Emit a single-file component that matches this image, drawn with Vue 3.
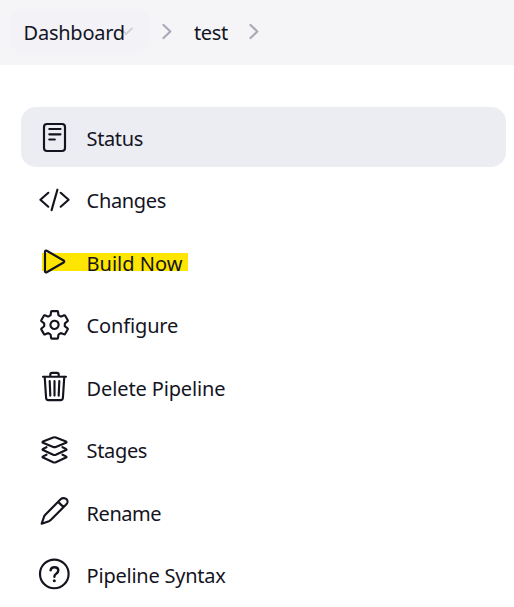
<script setup>
const items = [
  { label: 'Status', icon: 'status', active: true, tracking: -0.38 },
  { label: 'Changes', icon: 'code', tracking: -0.35 },
  { label: 'Build Now', icon: 'play', marked: true, tracking: 0 },
  { label: 'Configure', icon: 'gear', tracking: -0.15 },
  { label: 'Delete Pipeline', icon: 'trash', tracking: -0.13 },
  { label: 'Stages', icon: 'layers', tracking: -0.35 },
  { label: 'Rename', icon: 'pencil', tracking: -0.45 },
  { label: 'Pipeline Syntax', icon: 'help', tracking: -0.23 },
]
</script>

<template>
  <div class="page">
    <nav class="breadcrumbs">
      <a class="crumb current">
        <span>Dashboard</span>
        <svg class="tick" width="14" height="10" viewBox="0 0 14 10"><path d="M1.500 2.500 6 7 12.500 1" /></svg>
      </a>
      <svg class="chevron first" width="10" height="17" viewBox="0 0 10 17"><path d="M1.5 2 8.3 8.5 1.5 15" /></svg>
      <a class="crumb plain">test</a>
      <svg class="chevron" width="10" height="17" viewBox="0 0 10 17"><path d="M1.5 2 8.3 8.5 1.5 15" /></svg>
    </nav>

    <aside class="tasks">
      <a v-for="item in items" :key="item.label" class="task" :class="{ active: item.active }">
        <span v-if="item.marked" class="marker"></span>
        <svg class="icon" width="36" height="36" viewBox="0 0 36 36">
          <g v-if="item.icon === 'status'">
            <rect x="7" y="5" width="21" height="27" rx="3" />
            <path d="M12.3 10h11.2M12.3 15.3h11.2M12.3 20.5h5.5" />
          </g>
          <path v-else-if="item.icon === 'code'" d="M11.300 10.800 3.400 17.700l7.900 7M23.700 10.800l7.900 6.900-7.900 7M20.400 7.700l-5.800 20.400" />
          <path v-else-if="item.icon === 'play'" d="M8 7.700v19.600c0 1 .8 1.500 1.700 1l16.900-9.800c.9-.5.9-1.500 0-2L9.700 6.700C8.800 6.200 8 6.700 8 7.700z" />
          <g v-else-if="item.icon === 'gear'" transform="translate(1.100 1.400) scale(.0642)" class="fine">
            <path d="M262.29 192.31a64 64 0 1057.4 57.4 64.13 64.13 0 00-57.4-57.4zM416.39 256a154.34 154.34 0 01-1.53 20.79l45.21 35.46a10.81 10.81 0 012.45 13.75l-42.77 74a10.81 10.81 0 01-13.14 4.59l-44.9-18.08a16.11 16.11 0 00-15.17 1.75A164.48 164.48 0 01325 400.8a15.94 15.94 0 00-8.82 12.14l-6.73 47.89a11.08 11.08 0 01-10.68 9.17h-85.54a11.11 11.11 0 01-10.69-8.87l-6.72-47.82a16.07 16.07 0 00-9-12.22 155.3 155.3 0 01-21.46-12.57 16 16 0 00-15.11-1.71l-44.89 18.07a10.81 10.81 0 01-13.14-4.58l-42.77-74a10.8 10.8 0 012.45-13.75l38.21-30a16.05 16.05 0 006-14.08c-.36-4.17-.58-8.33-.58-12.5s.21-8.27.58-12.35a16 16 0 00-6.07-13.94l-38.19-30A10.81 10.81 0 0149.48 186l42.77-74a10.81 10.81 0 0113.14-4.59l44.9 18.08a16.11 16.11 0 0015.17-1.75A164.48 164.48 0 01187 111.2a15.94 15.94 0 008.82-12.14l6.73-47.89A11.08 11.08 0 01213.23 42h85.54a11.11 11.11 0 0110.69 8.87l6.72 47.82a16.07 16.07 0 009 12.22 155.3 155.3 0 0121.46 12.57 16 16 0 0015.11 1.71l44.89-18.07a10.81 10.81 0 0113.14 4.58l42.77 74a10.8 10.8 0 01-2.45 13.75l-38.21 30a16.05 16.05 0 00-6.05 14.08c.33 4.14.55 8.3.55 12.47z" />
          </g>
          <path v-else-if="item.icon === 'trash'" d="M6 7.700h23M7.700 7.700l1.400 21.300c.1 1.300.9 2.100 2.200 2.100h12.400c1.300 0 2.100-.8 2.200-2.100L27.300 7.700M13.300 7.700V5.500c0-1 .6-1.600 1.600-1.600h5.200c1 0 1.600.6 1.600 1.600V7.700M12.700 12l.6 14.600M17.500 12v14.600M22.300 12l-.6 14.600" />
          <g v-else-if="item.icon === 'layers'">
            <path d="M16.200 5.500 6 9.600c-.7.300-.7.900 0 1.200l10.200 4.100c.8.300 1.800.3 2.600 0L29 10.800c.7-.3.7-.9 0-1.200L18.800 5.500c-.8-.3-1.800-.3-2.600 0z" />
            <path d="M9.500 15.200 6 16.900c-.7.300-.7.900 0 1.200l10.200 4.700c.8.300 1.800.3 2.600 0L29 18.100c.7-.3.7-.9 0-1.200l-3.500-1.700M9.500 22.700 6 24.400c-.7.300-.7.900 0 1.200l10.200 4.700c.8.300 1.800.3 2.600 0L29 25.600c.7-.3.7-.9 0-1.200l-3.500-1.700" />
          </g>
          <path v-else-if="item.icon === 'pencil'" d="M23.900 5.100 8.300 20.700c-.6.600-.9 1-1.200 1.800L4.700 29.700l7.200-2.500c.8-.3 1.200-.6 1.800-1.200L29.400 10.300c1.400-1.400 1.500-3.600.2-5-1.400-1.500-4.200-1.700-5.700-.2zM21.100 7.900l5.500 5.200" />
          <g v-else>
            <circle cx="17.300" cy="16.900" r="14.300" />
            <path class="bold" d="M13.600 13.300c.3-1.900 1.800-3 3.800-3 2.200 0 3.900 1.300 3.900 3.200 0 1.500-.8 2.300-2.100 3.200-1.300.8-1.800 1.500-1.800 2.700v.3" />
            <circle class="dot" cx="17.300" cy="23.700" r="1.500" />
          </g>
        </svg>
        <span class="label" :style="{ letterSpacing: item.tracking + 'px' }">{{ item.label }}</span>
      </a>
    </aside>
  </div>
</template>

<style>
body {
  margin: 0;
  background: #fff;
}
</style>

<style scoped>
.page {
  height: 607px;
  overflow: hidden;
  color: #14141f;
  font-family: 'Noto Sans', 'Open Sans', sans-serif;
  font-size: 20px;
  line-height: 28px;
}
.breadcrumbs {
  box-sizing: border-box;
  height: 65px;
  padding: 9px;
  display: flex;
  align-items: flex-start;
  background: #f5f5f8;
}
.crumb {
  letter-spacing: -0.4px;
}
.current {
  box-sizing: border-box;
  width: 141px;
  height: 44px;
  padding: 10px 0 0 14.6px;
  border-radius: 15px;
  background: #f2f2f7;
  display: flex;
  letter-spacing: -0.25px;
}
.current span {
  position: relative;
  z-index: 1;
  width: 100px;
}
.tick {
  margin: 8px 0 0 -4px;
  fill: none;
  stroke: #d0d0d7;
  stroke-width: 1.8;
}
.plain {
  width: 33px;
  margin-right: 22px;
  padding: 10px 0 0 22px;
}
.chevron {
  margin-top: 13.500px;
  fill: none;
  stroke: #a9a9b9;
  stroke-width: 2.2;
  stroke-linecap: round;
  stroke-linejoin: round;
}
.first {
  margin-left: 12px;
}
.tasks {
  padding: 42px 8px 0 21px;
  display: flex;
  flex-direction: column;
  gap: 2.5px;
}
.task {
  position: relative;
  box-sizing: border-box;
  height: 60px;
  padding: 12px 16px 0;
  border-radius: 15px;
  display: flex;
  align-items: flex-start;
}
.active {
  background: #ecedf3;
}
.marker {
  position: absolute;
  left: 21px;
  top: 21px;
  width: 146px;
  height: 18px;
  background: #ffe600;
}
.icon {
  position: relative;
  flex: none;
  fill: none;
  stroke: #14141f;
  stroke-width: 2.15;
  stroke-linecap: round;
  stroke-linejoin: round;
}
.fine {
  stroke-width: 33;
}
.bold {
  stroke-width: 2.4;
}
.dot {
  fill: #14141f;
  stroke: none;
}
.label {
  position: relative;
  margin: 5.5px 0 0 13.6px;
  white-space: nowrap;
}
</style>
